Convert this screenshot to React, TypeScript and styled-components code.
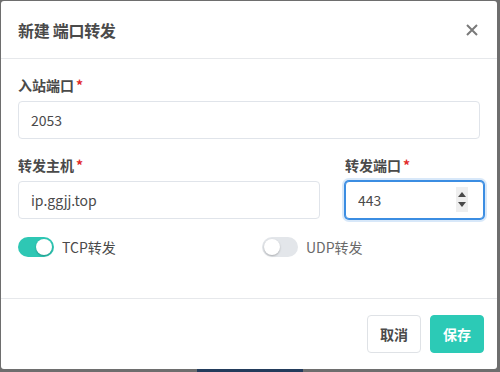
import React, { useState } from 'react';
import styled, { createGlobalStyle } from 'styled-components';

const GlobalStyle = createGlobalStyle`
  html, body {
    margin: 0;
    padding: 0;
    background: #6e6e6e;
    font-family: "Noto Sans CJK SC", "Noto Sans", sans-serif;
    overflow: hidden;
  }
`;

const Backdrop = styled.div`
  position: relative;
  width: 500px;
  height: 372px;
  padding: 1px 0 0 1px;
  box-sizing: border-box;
`;

const PageStrip = styled.div`
  position: absolute;
  left: 197px;
  bottom: 0;
  width: 106px;
  height: 3px;
  background: #233c5c;
`;

const Card = styled.div`
  position: relative;
  width: 496px;
  height: 368px;
  background: #fff;
  border-radius: 3px;
  display: flex;
  flex-direction: column;
  overflow: hidden;
`;

const Header = styled.header`
  height: 57px;
  flex-shrink: 0;
  display: flex;
  align-items: center;
  justify-content: space-between;
  padding: 0 18px 0 17px;
  border-bottom: 1px solid #e6e8eb;
`;

const Title = styled.h2`
  margin: 0;
  font-size: 16px;
  font-weight: 700;
  color: #4a4a4a;
  letter-spacing: -0.3px;
`;

const Close = styled.button`
  border: 0;
  background: none;
  padding: 0;
  width: 14px;
  height: 14px;
  cursor: pointer;
  display: flex;
`;

const Body = styled.div`
  flex: 1;
  padding: 17px 17px 0 17px;
  display: flex;
  flex-direction: column;
`;

const Row = styled.div`
  display: grid;
  grid-template-columns: 302px 139px;
  column-gap: 25px;
`;

const Field = styled.div`
  display: flex;
  flex-direction: column;
  margin-bottom: 17px;
`;

const Label = styled.label`
  font-size: 14px;
  font-weight: 700;
  line-height: 18px;
  color: #4a4a4a;
  margin-bottom: 7px;

  span {
    color: #e22a2a;
    margin-left: 2px;
  }
`;

const InputWrap = styled.div`
  position: relative;
`;

const Input = styled.input<{ $focused?: boolean }>`
  box-sizing: border-box;
  width: 100%;
  height: 38px;
  padding: 0 12px;
  border-radius: 4px;
  border: 1px solid ${(p) => (p.$focused ? '#3b8de2' : '#e0e4ea')};
  box-shadow: ${(p) =>
    p.$focused ? '0 0 0 1px #3b8de2, 0 0 0 3px rgba(59,141,226,0.2)' : 'none'};
  font-family: "Noto Sans CJK SC", "Noto Sans", sans-serif;
  font-size: 14px;
  color: #4a4a4a;
  outline: none;
`;

const Spinner = styled.div`
  position: absolute;
  right: 16px;
  top: 6px;
  width: 12px;
  height: 25px;
  background: #efefef;
  display: flex;
  flex-direction: column;
  align-items: center;
  justify-content: center;
  gap: 5px;
`;

const Arrow = styled.div<{ $down?: boolean }>`
  width: 0;
  height: 0;
  border-left: 4px solid transparent;
  border-right: 4px solid transparent;
  ${(p) =>
    p.$down ? 'border-top: 5px solid #4a4a4a;' : 'border-bottom: 5px solid #4a4a4a;'}
`;

const Toggles = styled.div`
  display: grid;
  grid-template-columns: 244px 1fr;
  margin-top: 1px;
`;

const ToggleItem = styled.label<{ $on?: boolean }>`
  display: flex;
  align-items: center;
  gap: 8px;
  font-size: 14px;
  color: ${(p) => (p.$on ? '#4a4a4a' : '#6a6a6a')};
  cursor: pointer;
`;

const Track = styled.span<{ $on?: boolean }>`
  position: relative;
  width: 36px;
  height: 20px;
  border-radius: 10px;
  background: ${(p) => (p.$on ? '#2ec7b4' : '#e3e6ea')};
  flex-shrink: 0;

  &::after {
    content: '';
    position: absolute;
    top: 2px;
    left: ${(p) => (p.$on ? '18px' : '2px')};
    width: 16px;
    height: 16px;
    border-radius: 50%;
    background: #fff;
    box-shadow: 0 1px 2px rgba(0, 0, 0, 0.25);
  }
`;

const Footer = styled.footer`
  flex-shrink: 0;
  height: 70px;
  border-top: 1px solid #e6e8eb;
  display: flex;
  align-items: center;
  justify-content: flex-end;
  gap: 9px;
  padding: 0 13px 0 0;
`;

const Button = styled.button<{ $primary?: boolean }>`
  height: 38px;
  padding: 0 12px;
  border-radius: 4px;
  font-family: "Noto Sans CJK SC", "Noto Sans", sans-serif;
  font-size: 14px;
  font-weight: 700;
  cursor: pointer;
  border: 1px solid ${(p) => (p.$primary ? '#2ccab6' : '#dfe2e6')};
  background: ${(p) => (p.$primary ? '#2ccab6' : '#fff')};
  color: ${(p) => (p.$primary ? '#fff' : '#4a4a4a')};
`;

const App = () => {
  const [tcp, setTcp] = useState(true);
  const [udp, setUdp] = useState(false);

  return (
    <>
      <GlobalStyle />
      <Backdrop>
        <PageStrip />
        <Card>
          <Header>
            <Title>新建 端口转发</Title>
            <Close aria-label="close">
              <svg width="14" height="14" viewBox="0 0 14 14">
                <path d="M2 2L12 12M12 2L2 12" stroke="#7a7a7a" strokeWidth="2" />
              </svg>
            </Close>
          </Header>
          <Body>
            <Field>
              <Label>
                入站端口<span>*</span>
              </Label>
              <Input defaultValue="2053" />
            </Field>
            <Row>
              <Field>
                <Label>
                  转发主机<span>*</span>
                </Label>
                <Input defaultValue="ip.ggjj.top" />
              </Field>
              <Field>
                <Label>
                  转发端口<span>*</span>
                </Label>
                <InputWrap>
                  <Input $focused defaultValue="443" />
                  <Spinner>
                    <Arrow />
                    <Arrow $down />
                  </Spinner>
                </InputWrap>
              </Field>
            </Row>
            <Toggles>
              <ToggleItem $on={tcp} onClick={() => setTcp(!tcp)}>
                <Track $on={tcp} />
                TCP转发
              </ToggleItem>
              <ToggleItem $on={udp} onClick={() => setUdp(!udp)}>
                <Track $on={udp} />
                UDP转发
              </ToggleItem>
            </Toggles>
          </Body>
          <Footer>
            <Button>取消</Button>
            <Button $primary>保存</Button>
          </Footer>
        </Card>
      </Backdrop>
    </>
  );
};

export default App;
